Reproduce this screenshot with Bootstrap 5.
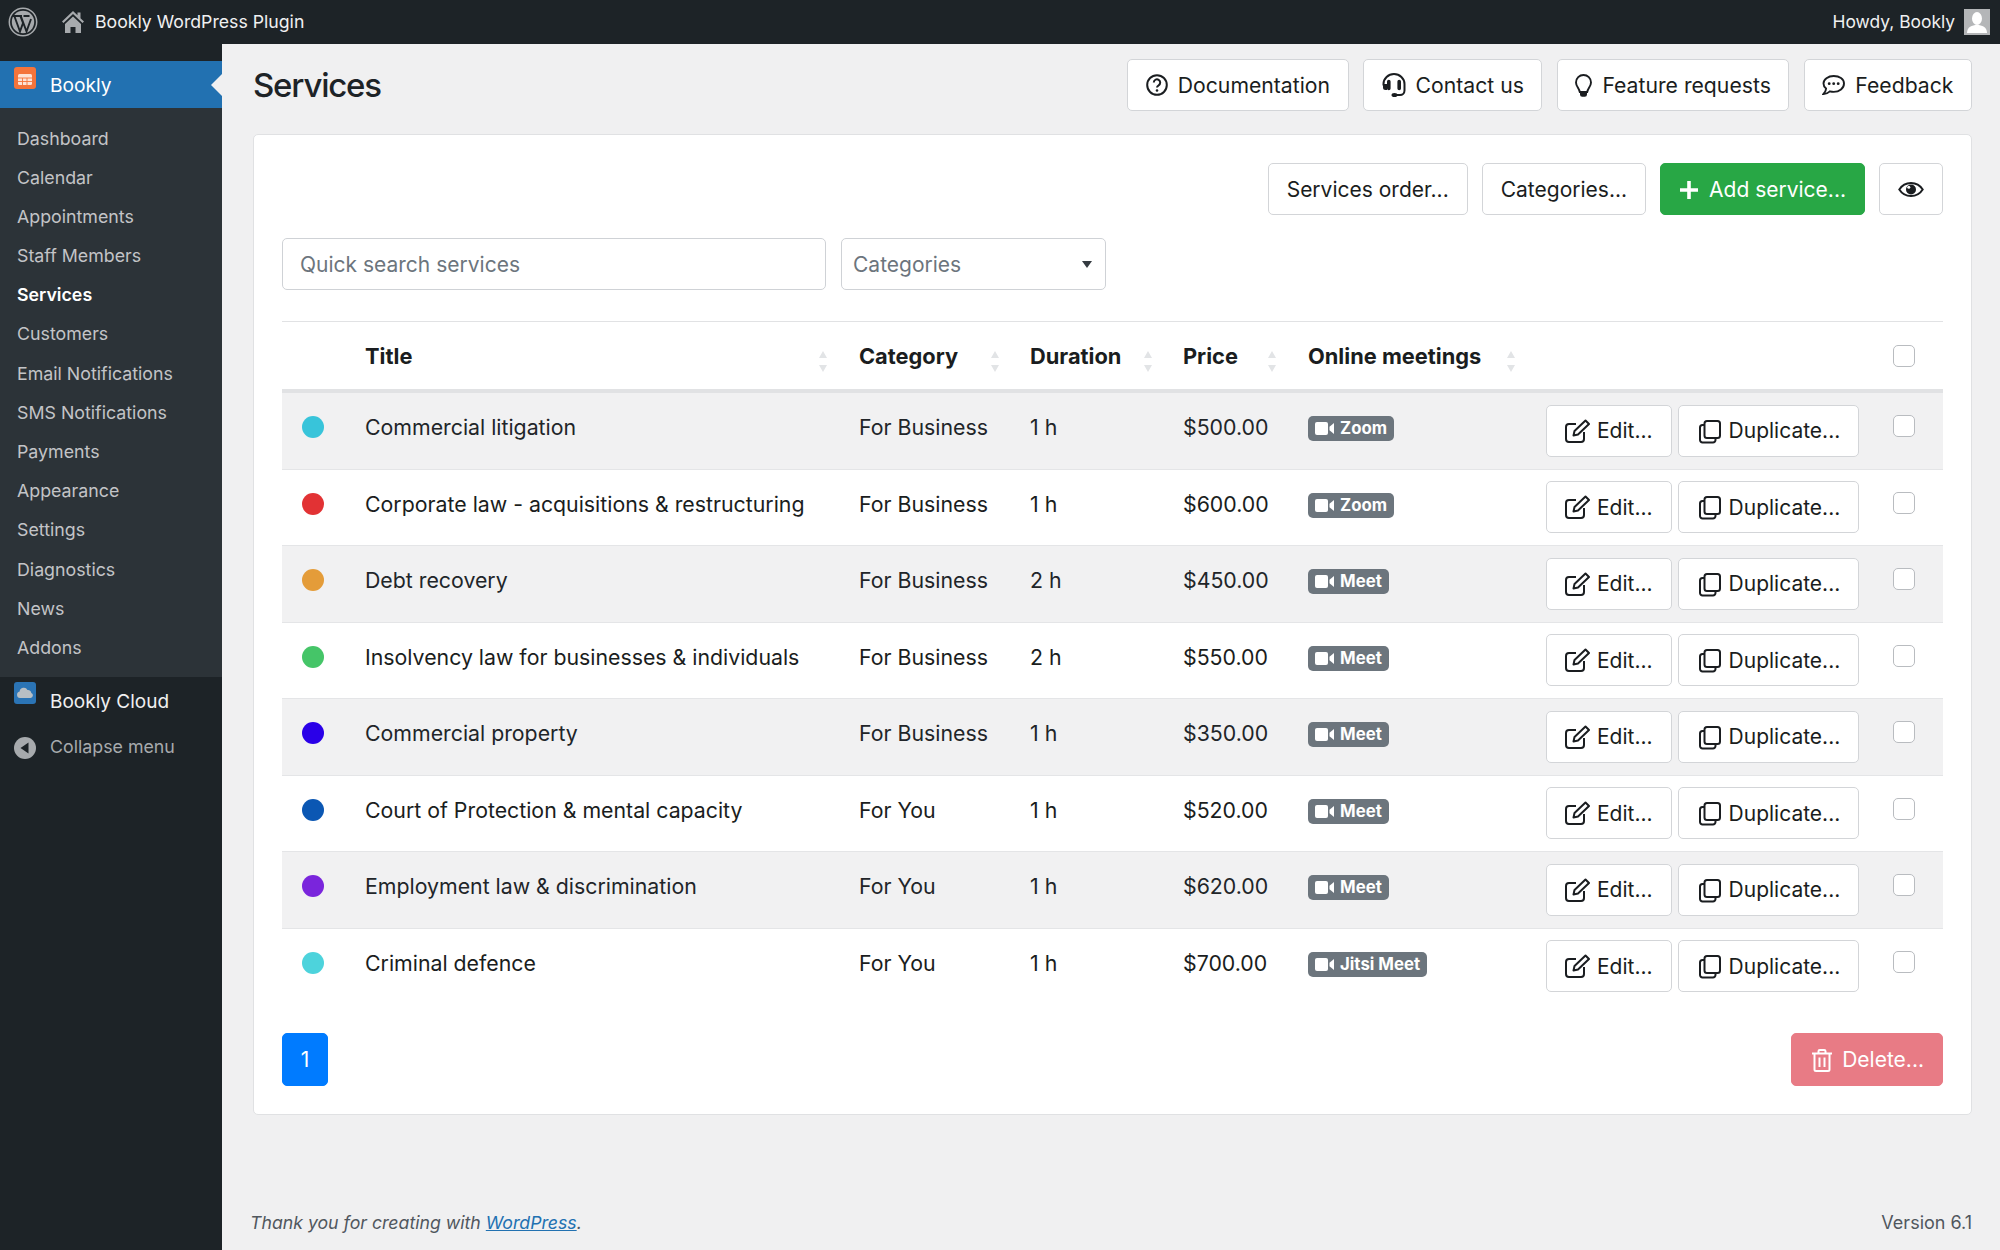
<!DOCTYPE html>
<html lang="en">
<head>
<meta charset="utf-8">
<title>Services</title>
<link rel="stylesheet" href="https://cdn.jsdelivr.net/npm/bootstrap@5.3.0/dist/css/bootstrap.min.css">
<style>
html,body{height:100%}
body{font-family:Inter,"Liberation Sans",sans-serif;background:#f0f0f1;color:#1a1d20;overflow:hidden}
.wp-shell{height:1250px}
.wp-bar{height:44px;background:#1d2327;color:#f0f0f1;font-size:17.7px;padding-right:10px}
.wp-who{font-size:17.4px}
.wp-logo{width:30px;height:30px;margin:0 24px 0 8px}
.wp-home{width:22px;height:22px;margin-right:11px}
.wp-ava{width:26px;height:26px;margin-left:9px}
.wp-body{height:1206px}
.wp-side{width:222px;flex:none;background:#1d2327;padding-top:17px}
.side-cur{height:47px;background:#2271b1;color:#fff;font-size:19.2px;line-height:49px;padding-left:14px}
.side-cur::after{content:"";position:absolute;right:0;top:13px;border:11px solid transparent;border-left-width:0;border-right-color:#f0f0f1}
.side-ico{width:22px;height:22px;flex:none;margin-top:6px;margin-right:14px}
.side-sub{background:#2c3338;padding:10.500px 0 9.500px;margin:0}
.side-sub li{height:39.2px;line-height:39.2px;padding-left:17px;font-size:17.8px;color:#c3c4c7}
.side-sub li.is-on{color:#fff;font-weight:600}
.side-cloud{height:47px;line-height:50px;font-size:19px;color:#f0f0f1;padding-left:14px}
.side-cloud .side-ico{margin-top:5px}
.side-col{height:44px;line-height:46px;font-size:17.8px;color:#a7aaad;padding-left:14px}
.side-col .side-ico{margin-top:13px}
.wp-main{padding:15px 28px 0 31px;min-width:0}
.pg-title{font-size:33px;font-weight:500;letter-spacing:-1.200px;margin:0;line-height:52px;color:#1d2327}
.top-gap{gap:14.500px}
.top-gap .btn.bk-btn{font-size:21.200px;padding:0 17.500px}
.tool-gap{gap:14px}
.btn.bk-btn{height:52px;padding:1px 18px 0;font-size:21px;line-height:50px;border:1px solid #d3d5d8;background:#fff;color:#1a1d20;border-radius:5px;display:inline-flex;align-items:center;white-space:nowrap}
.btn.bk-add{background:#28a745;border-color:#28a745;color:#fff}
.btn.bk-del{height:53px;padding-left:20px;background:#dc3545;border-color:#dc3545;color:#fff;opacity:.65}
.bk-ico{flex:none;margin-right:10px}
.act-gap .bk-ico{margin-right:8px}
.act-gap .btn:first-child .bk-ico{margin-right:7px}
.bk-card{margin-top:23px;background:#fff;border:1px solid #e0e1e3;border-radius:5px;padding:28px}
.bk-filters{margin-top:23px;gap:15px}
.bk-search.form-control{width:544px;height:52px;font-size:21px;padding:0 17px;border-color:#cfd2d6;border-radius:5px;color:#1a1d20}
.bk-search::placeholder{color:#6c757d}
.bk-select.form-select{width:265px;height:52px;font-size:21px;padding:1px 17px 0 11px;border-color:#cfd2d6;border-radius:5px;color:#6c757d;background-image:url("data:image/svg+xml,%3Csvg xmlns='http://www.w3.org/2000/svg' width='10' height='7'%3E%3Cpath d='M0 0h10L5 7z' fill='%23343a40'/%3E%3C/svg%3E");background-size:10px 7px;background-position:right 13px center}
.svc-table.table{margin:31px 0 0;table-layout:fixed;width:1661px;font-size:21.300px;border-collapse:separate;border-spacing:0;--bs-table-striped-bg:#f1f1f2;--bs-table-border-color:#e4e5e7;border-top:1px solid #e1e2e4}
.svc-table.table>:not(caption)>*>*{padding:19px 16px 0;vertical-align:top;line-height:30px;color:#1a1d20}
.svc-table.table>tbody>tr>td{height:76.500px}
.svc-table.table>thead>tr>th{height:71px;padding-top:19px;font-size:21.800px;font-weight:700;border-bottom:4px solid #e1e2e4;white-space:nowrap}
.svc-table.table>tbody>tr:last-child>td{border-bottom:0}
.svc-table.table>tbody>tr>td.c-dot{padding:23px 0 0 20px}
.svc-table.table>tbody>tr>td.c-badge{padding-top:23px}
.svc-table.table>tbody>tr>td.c-act{padding-top:11.500px}
.svc-table.table>*>tr>.c-chk{padding:22px 0 0 18px}
.svc-table.table>thead>tr>th.c-chk{padding-top:23px}
.dot-mark{display:block;width:22px;height:22px;border-radius:50%}
.d1{background:#38c4da}.d2{background:#e23234}.d3{background:#e49c39}.d4{background:#45c568}.d5{background:#2a00e8}.d6{background:#0b57b3}.d7{background:#7a25dc}.d8{background:#4dd3dc}
.sort-mark{position:absolute;top:29px;width:8px;height:21px;color:#e2e4e6}
.chk-box.form-check-input{width:22px;height:22px;margin:0;border-color:#b9bcc0;border-radius:5px;display:block}
.bk-badge.badge{display:inline-flex;align-items:center;height:25px;padding:0 7px;font-size:16.800px;font-weight:700;line-height:1;background:#6c757d;border-radius:5px;vertical-align:top}
.bk-badge svg{margin-right:6px}
.act-gap{gap:6px}
.bk-foot-row{margin-top:28px}
.bk-pager{margin:0}
.bk-pager .page-link{height:53px;width:46px;line-height:51px;padding:0;text-align:center;font-size:21px;background:#007bff;border-color:#007bff;color:#fff;border-radius:5px!important}
.wp-foot{margin-top:auto;margin-left:-3px;padding-bottom:16px;font-size:17.700px;line-height:22px;color:#50575e}
.wp-foot a{color:#2271b1}
.wp-ver{font-size:18px}
</style>
</head>
<body>
<svg class="d-none" xmlns="http://www.w3.org/2000/svg">
<symbol id="i-edit" viewBox="0 0 25 25"><path d="M11 5H4a3 3 0 0 0-3 3v12a3 3 0 0 0 3 3h12a3 3 0 0 0 3-3v-7" fill="none" stroke="currentColor" stroke-width="2"/><path d="M8.500 16.500l1-4.500L20.500 1.500l3.500 3.500L13 15.500z" fill="none" stroke="currentColor" stroke-width="2" stroke-linejoin="round"/></symbol>
<symbol id="i-copy" viewBox="0 0 24 25"><rect x="7.500" y="2" width="15.500" height="17" rx="2.500" fill="none" stroke="currentColor" stroke-width="2"/><path d="M7.500 6H5.500A2.500 2.500 0 0 0 3 8.500V21a2.500 2.500 0 0 0 2.500 2.500H16a2.500 2.500 0 0 0 2.500-2.500v-2" fill="none" stroke="currentColor" stroke-width="2"/></symbol>
<symbol id="i-vid" viewBox="0 0 19 13"><rect x="0" y="0" width="13" height="13" rx="2" fill="currentColor"/><path d="M14.500 4.800L19 1v11l-4.500-3.800z" fill="currentColor"/></symbol>
<symbol id="i-sort" viewBox="0 0 8 21"><path d="M4 0l4 7H0zM4 21l4-7H0z" fill="currentColor"/></symbol>
</svg>
<div class="wp-shell d-flex flex-column">
  <div class="wp-bar d-flex align-items-center">
    <svg class="wp-logo" viewBox="0 0 30 30"><circle cx="15" cy="15" r="13.700" fill="none" stroke="#a7aaad" stroke-width="1.500"/><circle cx="15" cy="15" r="11.200" fill="#a7aaad"/><path d="M6.500 9.500l5.500 15 3-8.500-2.500-6.500M13 9.500l5.500 15 4.500-12.500M5 9h9M15.500 9h6" fill="none" stroke="#1d2327" stroke-width="1.900"/></svg>
    <svg class="wp-home" viewBox="0 0 22 22"><path d="M11 0L0 10.500l1.500 1.500L11 3l9.500 9 1.500-1.500-3.500-3.300V1.500h-3v2.800z" fill="#a7aaad"/><path d="M3 13L11 5.500l8 7.500v9h-5.500v-6h-5v6H3z" fill="#a7aaad"/></svg>
    <span>Bookly WordPress Plugin</span>
    <span class="ms-auto wp-who">Howdy, Bookly</span>
    <svg class="wp-ava" viewBox="0 0 26 26"><rect width="26" height="26" fill="#b4b6b8"/><ellipse cx="13" cy="9.500" rx="5" ry="6.500" fill="#fff"/><path d="M3 24c0-6 5-8 10-8s10 2 10 8z" fill="#fff"/></svg>
  </div>
  <div class="wp-body d-flex">
    <aside class="wp-side">
      <div class="side-cur position-relative d-flex">
        <svg class="side-ico" viewBox="0 0 22 22"><rect width="22" height="22" rx="3" fill="#f4743b"/><rect x="4" y="7" width="14" height="11" rx="1.500" fill="#fde3d6"/><path d="M4 11h14M4 14.500h14M8.500 11v7M13 11v7" stroke="#f4743b" stroke-width=".9"/></svg>
        <span>Bookly</span>
      </div>
      <ul class="side-sub list-unstyled">
        <li>Dashboard</li>
        <li>Calendar</li>
        <li>Appointments</li>
        <li>Staff Members</li>
        <li class="is-on">Services</li>
        <li>Customers</li>
        <li>Email Notifications</li>
        <li>SMS Notifications</li>
        <li>Payments</li>
        <li>Appearance</li>
        <li>Settings</li>
        <li>Diagnostics</li>
        <li>News</li>
        <li>Addons</li>
      </ul>
      <div class="side-cloud d-flex">
        <svg class="side-ico" viewBox="0 0 22 22"><rect width="22" height="22" rx="3" fill="#2b74b5"/><path d="M6 16a3.300 3.300 0 0 1-.4-6.500 4.200 4.200 0 0 1 7.900-1.500 3.200 3.200 0 0 1 3.800 3 2.600 2.600 0 0 1-.8 5z" fill="#b9bfc4"/></svg>
        <span>Bookly Cloud</span>
      </div>
      <div class="side-col d-flex">
        <svg class="side-ico" viewBox="0 0 22 22"><circle cx="11" cy="11" r="11" fill="#a7aaad"/><path d="M14.500 5.500v11L6.500 11z" fill="#1d2327"/></svg>
        <span>Collapse menu</span>
      </div>
    </aside>
    <main class="wp-main d-flex flex-column flex-grow-1">
      <div class="d-flex align-items-center justify-content-between">
        <h1 class="pg-title">Services</h1>
        <div class="d-flex top-gap">
          <button class="btn bk-btn" type="button"><svg class="bk-ico" width="22" height="22" viewBox="0 0 22 22"><circle cx="11" cy="11" r="9.800" fill="none" stroke="currentColor" stroke-width="2"/><path d="M7.800 8.500a3.200 3.200 0 1 1 4.800 2.800c-1 .6-1.600 1.100-1.600 2.300" fill="none" stroke="currentColor" stroke-width="2"/><circle cx="11" cy="16.500" r="1.300" fill="currentColor"/></svg>Documentation</button>
          <button class="btn bk-btn" type="button"><svg class="bk-ico" width="24" height="24" viewBox="0 0 24 24"><path d="M1.500 12.500V11a10.500 10 0 0 1 21 0v6.500a4.500 4.500 0 0 1-4.500 4.500h-4" fill="none" stroke="currentColor" stroke-width="2"/><path d="M5 8.500a1.800 1.800 0 0 1 3.600 0v7a1.800 1.800 0 0 1-3.600 0zM15.400 8.500a1.800 1.800 0 0 1 3.600 0v7a1.800 1.800 0 0 1-3.600 0z" fill="currentColor"/><path d="M1 11h4v6H3.500A2.500 2.500 0 0 1 1 14.500z" fill="currentColor"/><ellipse cx="12.500" cy="22" rx="3" ry="2" fill="currentColor"/></svg>Contact us</button>
          <button class="btn bk-btn" type="button"><svg class="bk-ico" width="17" height="23" viewBox="0 0 17 23"><path d="M8.500 1A7.500 7.500 0 0 0 1 8.500c0 3.800 3 5.500 3.800 9.500h7.400c.8-4 3.800-5.700 3.800-9.500A7.500 7.500 0 0 0 8.500 1z" fill="none" stroke="currentColor" stroke-width="1.900"/><path d="M5 18.500h7v2a2.200 2.200 0 0 1-2.200 2.200H7.200A2.200 2.200 0 0 1 5 20.500z" fill="currentColor"/></svg>Feature requests</button>
          <button class="btn bk-btn" type="button"><svg class="bk-ico" width="23" height="20" viewBox="0 0 23 20"><path d="M11.700 1C6 1 1.500 4.300 1.500 8.500c0 2 1 3.800 2.600 5.100 0 1.900-1 3.600-2.600 5.400 2.700-.2 5-1.300 6.400-2.600 1.200.3 2.500.5 3.800.5 5.700 0 10.300-3.600 10.300-8.400S17.400 1 11.700 1z" fill="none" stroke="currentColor" stroke-width="1.900"/><circle cx="7.200" cy="8.700" r="1.400" fill="currentColor"/><circle cx="11.700" cy="8.700" r="1.400" fill="currentColor"/><circle cx="16.200" cy="8.700" r="1.400" fill="currentColor"/></svg>Feedback</button>
        </div>
      </div>
      <section class="bk-card">
        <div class="d-flex justify-content-end tool-gap">
          <button class="btn bk-btn" type="button">Services order...</button>
          <button class="btn bk-btn" type="button">Categories...</button>
          <button class="btn bk-btn bk-add" type="button"><svg class="bk-ico" width="20" height="20" viewBox="0 0 20 20"><path d="M10 1v18M1 10h18" stroke="currentColor" stroke-width="3.600"/></svg>Add service...</button>
          <button class="btn bk-btn" type="button" aria-label="Columns"><svg width="26" height="15" viewBox="0 0 26 15"><path d="M13 1C8 1 3.500 4 1.300 7.500 3.500 11 8 14 13 14s9.500-3 11.700-6.500C22.500 4 18 1 13 1z" fill="none" stroke="currentColor" stroke-width="2"/><circle cx="13" cy="7.500" r="5" fill="currentColor"/><circle cx="10.800" cy="5.300" r="1.500" fill="#fff"/></svg></button>
        </div>
        <div class="d-flex bk-filters">
          <input class="form-control bk-search" type="text" placeholder="Quick search services">
          <select class="form-select bk-select"><option>Categories</option></select>
        </div>
        <table class="table table-striped svc-table">
          <colgroup><col style="width:67px"><col style="width:494px"><col style="width:171px"><col style="width:153px"><col style="width:125px"><col style="width:238px"><col style="width:345px"><col style="width:68px"></colgroup>
          <thead>
            <tr>
              <th></th>
              <th class="position-relative">Title<svg class="sort-mark" style="left:470px"><use href="#i-sort"/></svg></th>
              <th class="position-relative">Category<svg class="sort-mark" style="left:148px"><use href="#i-sort"/></svg></th>
              <th class="position-relative">Duration<svg class="sort-mark" style="left:130px"><use href="#i-sort"/></svg></th>
              <th class="position-relative">Price<svg class="sort-mark" style="left:101px"><use href="#i-sort"/></svg></th>
              <th class="position-relative">Online meetings<svg class="sort-mark" style="left:215px"><use href="#i-sort"/></svg></th>
              <th></th>
              <th class="c-chk"><input class="form-check-input chk-box" type="checkbox" aria-label="All"></th>
            </tr>
          </thead>
          <tbody>
            <tr><td class="c-dot"><span class="dot-mark d1"></span></td><td>Commercial litigation</td><td>For Business</td><td>1 h</td><td>$500.00</td><td class="c-badge"><span class="badge bk-badge"><svg width="19" height="13"><use href="#i-vid"/></svg>Zoom</span></td><td class="c-act"><div class="d-flex act-gap"><button class="btn bk-btn" type="button"><svg class="bk-ico" width="25" height="25"><use href="#i-edit"/></svg>Edit...</button><button class="btn bk-btn" type="button"><svg class="bk-ico" width="24" height="25"><use href="#i-copy"/></svg>Duplicate...</button></div></td><td class="c-chk"><input class="form-check-input chk-box" type="checkbox" aria-label="Select"></td></tr>
            <tr><td class="c-dot"><span class="dot-mark d2"></span></td><td>Corporate law - acquisitions &amp; restructuring</td><td>For Business</td><td>1 h</td><td>$600.00</td><td class="c-badge"><span class="badge bk-badge"><svg width="19" height="13"><use href="#i-vid"/></svg>Zoom</span></td><td class="c-act"><div class="d-flex act-gap"><button class="btn bk-btn" type="button"><svg class="bk-ico" width="25" height="25"><use href="#i-edit"/></svg>Edit...</button><button class="btn bk-btn" type="button"><svg class="bk-ico" width="24" height="25"><use href="#i-copy"/></svg>Duplicate...</button></div></td><td class="c-chk"><input class="form-check-input chk-box" type="checkbox" aria-label="Select"></td></tr>
            <tr><td class="c-dot"><span class="dot-mark d3"></span></td><td>Debt recovery</td><td>For Business</td><td>2 h</td><td>$450.00</td><td class="c-badge"><span class="badge bk-badge"><svg width="19" height="13"><use href="#i-vid"/></svg>Meet</span></td><td class="c-act"><div class="d-flex act-gap"><button class="btn bk-btn" type="button"><svg class="bk-ico" width="25" height="25"><use href="#i-edit"/></svg>Edit...</button><button class="btn bk-btn" type="button"><svg class="bk-ico" width="24" height="25"><use href="#i-copy"/></svg>Duplicate...</button></div></td><td class="c-chk"><input class="form-check-input chk-box" type="checkbox" aria-label="Select"></td></tr>
            <tr><td class="c-dot"><span class="dot-mark d4"></span></td><td>Insolvency law for businesses &amp; individuals</td><td>For Business</td><td>2 h</td><td>$550.00</td><td class="c-badge"><span class="badge bk-badge"><svg width="19" height="13"><use href="#i-vid"/></svg>Meet</span></td><td class="c-act"><div class="d-flex act-gap"><button class="btn bk-btn" type="button"><svg class="bk-ico" width="25" height="25"><use href="#i-edit"/></svg>Edit...</button><button class="btn bk-btn" type="button"><svg class="bk-ico" width="24" height="25"><use href="#i-copy"/></svg>Duplicate...</button></div></td><td class="c-chk"><input class="form-check-input chk-box" type="checkbox" aria-label="Select"></td></tr>
            <tr><td class="c-dot"><span class="dot-mark d5"></span></td><td>Commercial property</td><td>For Business</td><td>1 h</td><td>$350.00</td><td class="c-badge"><span class="badge bk-badge"><svg width="19" height="13"><use href="#i-vid"/></svg>Meet</span></td><td class="c-act"><div class="d-flex act-gap"><button class="btn bk-btn" type="button"><svg class="bk-ico" width="25" height="25"><use href="#i-edit"/></svg>Edit...</button><button class="btn bk-btn" type="button"><svg class="bk-ico" width="24" height="25"><use href="#i-copy"/></svg>Duplicate...</button></div></td><td class="c-chk"><input class="form-check-input chk-box" type="checkbox" aria-label="Select"></td></tr>
            <tr><td class="c-dot"><span class="dot-mark d6"></span></td><td>Court of Protection &amp; mental capacity</td><td>For You</td><td>1 h</td><td>$520.00</td><td class="c-badge"><span class="badge bk-badge"><svg width="19" height="13"><use href="#i-vid"/></svg>Meet</span></td><td class="c-act"><div class="d-flex act-gap"><button class="btn bk-btn" type="button"><svg class="bk-ico" width="25" height="25"><use href="#i-edit"/></svg>Edit...</button><button class="btn bk-btn" type="button"><svg class="bk-ico" width="24" height="25"><use href="#i-copy"/></svg>Duplicate...</button></div></td><td class="c-chk"><input class="form-check-input chk-box" type="checkbox" aria-label="Select"></td></tr>
            <tr><td class="c-dot"><span class="dot-mark d7"></span></td><td>Employment law &amp; discrimination</td><td>For You</td><td>1 h</td><td>$620.00</td><td class="c-badge"><span class="badge bk-badge"><svg width="19" height="13"><use href="#i-vid"/></svg>Meet</span></td><td class="c-act"><div class="d-flex act-gap"><button class="btn bk-btn" type="button"><svg class="bk-ico" width="25" height="25"><use href="#i-edit"/></svg>Edit...</button><button class="btn bk-btn" type="button"><svg class="bk-ico" width="24" height="25"><use href="#i-copy"/></svg>Duplicate...</button></div></td><td class="c-chk"><input class="form-check-input chk-box" type="checkbox" aria-label="Select"></td></tr>
            <tr><td class="c-dot"><span class="dot-mark d8"></span></td><td>Criminal defence</td><td>For You</td><td>1 h</td><td>$700.00</td><td class="c-badge"><span class="badge bk-badge"><svg width="19" height="13"><use href="#i-vid"/></svg>Jitsi Meet</span></td><td class="c-act"><div class="d-flex act-gap"><button class="btn bk-btn" type="button"><svg class="bk-ico" width="25" height="25"><use href="#i-edit"/></svg>Edit...</button><button class="btn bk-btn" type="button"><svg class="bk-ico" width="24" height="25"><use href="#i-copy"/></svg>Duplicate...</button></div></td><td class="c-chk"><input class="form-check-input chk-box" type="checkbox" aria-label="Select"></td></tr>
          </tbody>
        </table>
        <div class="d-flex justify-content-between bk-foot-row">
          <ul class="pagination bk-pager"><li class="page-item active"><a class="page-link" href="#">1</a></li></ul>
          <button class="btn bk-btn bk-del" type="button" disabled><svg class="bk-ico" width="20" height="23" viewBox="0 0 20 23"><path d="M0 4.500h20M6.500 4.500V2.200A1.200 1.200 0 0 1 7.700 1h4.600a1.200 1.200 0 0 1 1.200 1.200v2.300M2.500 4.500v16a1.500 1.500 0 0 0 1.500 1.500h12a1.500 1.500 0 0 0 1.500-1.500v-16M7.500 8.500v9.500M12.500 8.500v9.500" fill="none" stroke="currentColor" stroke-width="2"/></svg>Delete...</button>
        </div>
      </section>
      <footer class="wp-foot d-flex justify-content-between">
        <span class="fst-italic">Thank you for creating with <a href="#">WordPress</a>.</span>
        <span class="wp-ver">Version 6.1</span>
      </footer>
    </main>
  </div>
</div>
<script src="https://cdn.jsdelivr.net/npm/bootstrap@5.3.0/dist/js/bootstrap.bundle.min.js"></script>
</body>
</html>
